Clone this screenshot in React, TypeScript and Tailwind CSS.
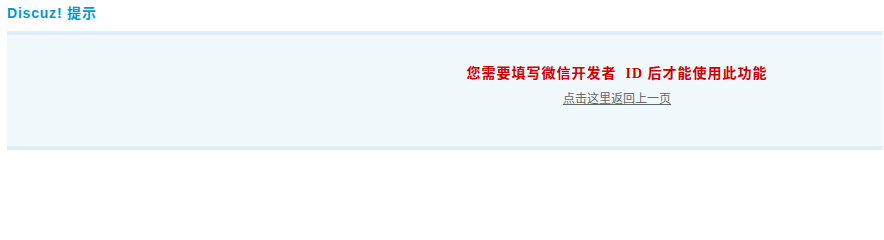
import React from 'react';

const cjk = '"Liberation Serif", "Noto Sans CJK SC", serif';

export default function App() {
  return (
    <div className="w-[884px] h-[216px] bg-white pl-[7px] pr-px pt-[3px]">
      <h3
        className="text-[14px] leading-[20px] font-bold text-[#0099cc] tracking-[0.8px]"
        style={{ fontFamily: '"Liberation Sans", "Noto Sans CJK SC", sans-serif' }}
      >
        Discuz! 提示
      </h3>
      <div className="mt-[8px] border-y-4 border-[#deeffa] bg-[#f2f9fd] pt-[28px] pb-[38px] pl-[344px] text-center">
        <h4 className="text-[14px] leading-[21px] font-bold text-[#cc0000] mb-[6px] tracking-[1px]" style={{ fontFamily: cjk }}>
          您需要填写微信开发者&nbsp; ID 后才能使用此功能
        </h4>
        <p className="text-[12px] leading-[18px]" style={{ fontFamily: cjk }}>
          <a href="#" className="text-[#666666] underline">点击这里返回上一页</a>
        </p>
      </div>
    </div>
  );
}
